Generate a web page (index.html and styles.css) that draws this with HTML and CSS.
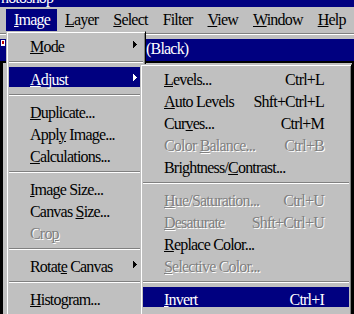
FILE: index.html
```html
<!DOCTYPE html>
<html lang="en">
<head>
<meta charset="utf-8">
<title>Photoshop - Image menu</title>
<link rel="stylesheet" href="styles.css">
</head>
<body>
<div class="app">
  <div class="app-title"><span class="app-title-text">Adobe Photoshop</span></div>
  <nav class="menubar">
    <span class="mb-item active"><u>I</u>mage</span>
    <span class="mb-item"><u>L</u>ayer</span>
    <span class="mb-item"><u>S</u>elect</span>
    <span class="mb-item">Filter</span>
    <span class="mb-item"><u>V</u>iew</span>
    <span class="mb-item"><u>W</u>indow</span>
    <span class="mb-item"><u>H</u>elp</span>
  </nav>
  <div class="menubar-rule"></div>
  <div class="doc">
    <div class="doc-title">
      <svg class="doc-icon" width="4" height="6" viewBox="0 0 4 6" shape-rendering="crispEdges"><rect width="4" height="6" fill="#fff"/><rect x="1" y="1" width="2" height="3" fill="#c00000"/></svg>
      <span class="doc-title-text">(Black)</span>
    </div>
    <div class="doc-body"></div>
  </div>

  <div class="menu menu-image">
    <div class="mi has-sub"><span class="label"><u>M</u>ode</span><svg class="arrow" width="4" height="7" viewBox="0 0 4 7" shape-rendering="crispEdges"><rect x="0" y="0" width="1" height="7"/><rect x="1" y="1" width="1" height="5"/><rect x="2" y="2" width="1" height="3"/><rect x="3" y="3" width="1" height="1"/></svg></div>
    <div class="sep"></div>
    <div class="mi has-sub sel"><span class="label"><u>A</u>djust</span><svg class="arrow" width="4" height="7" viewBox="0 0 4 7" shape-rendering="crispEdges"><rect x="0" y="0" width="1" height="7"/><rect x="1" y="1" width="1" height="5"/><rect x="2" y="2" width="1" height="3"/><rect x="3" y="3" width="1" height="1"/></svg></div>
    <div class="sep"></div>
    <div class="mi"><span class="label"><u>D</u>uplicate...</span></div>
    <div class="mi"><span class="label">Appl<u>y</u> Image...</span></div>
    <div class="mi"><span class="label"><u>C</u>alculations...</span></div>
    <div class="sep"></div>
    <div class="mi"><span class="label"><u>I</u>mage Size...</span></div>
    <div class="mi"><span class="label">Canvas <u>S</u>ize...</span></div>
    <div class="mi dis"><span class="label">Cro<u>p</u></span></div>
    <div class="sep"></div>
    <div class="mi has-sub"><span class="label">Rotat<u>e</u> Canvas</span><svg class="arrow" width="4" height="7" viewBox="0 0 4 7" shape-rendering="crispEdges"><rect x="0" y="0" width="1" height="7"/><rect x="1" y="1" width="1" height="5"/><rect x="2" y="2" width="1" height="3"/><rect x="3" y="3" width="1" height="1"/></svg></div>
    <div class="sep"></div>
    <div class="mi"><span class="label"><u>H</u>istogram...</span></div>
  </div>

  <div class="menu menu-adjust">
    <div class="mi"><span class="label"><u>L</u>evels...</span><span class="accel">Ctrl+L</span></div>
    <div class="mi"><span class="label"><u>A</u>uto Levels</span><span class="accel">Shft+Ctrl+L</span></div>
    <div class="mi"><span class="label">Cur<u>v</u>es...</span><span class="accel">Ctrl+M</span></div>
    <div class="mi dis"><span class="label">Color <u>B</u>alance...</span><span class="accel">Ctrl+B</span></div>
    <div class="mi"><span class="label">Brightness/<u>C</u>ontrast...</span></div>
    <div class="sep"></div>
    <div class="mi dis"><span class="label"><u>H</u>ue/Saturation...</span><span class="accel">Ctrl+U</span></div>
    <div class="mi dis"><span class="label"><u>D</u>esaturate</span><span class="accel">Shft+Ctrl+U</span></div>
    <div class="mi"><span class="label"><u>R</u>eplace Color...</span></div>
    <div class="mi dis"><span class="label"><u>S</u>elective Color...</span></div>
    <div class="sep"></div>
    <div class="mi sel"><span class="label"><u>I</u>nvert</span><span class="accel">Ctrl+I</span></div>
  </div>
</div>
</body>
</html>
```

FILE: styles.css
```css
* {
  box-sizing: border-box;
}

html,
body {
  margin: 0;
  padding: 0;
}

body {
  width: 354px;
  height: 314px;
  overflow: hidden;
  background: #000;
  font-family: "Liberation Serif", "Times New Roman", serif;
  font-size: 16px;
  letter-spacing: -0.8px;
  color: #000;
}

u {
  text-decoration-thickness: 1px;
  text-underline-offset: 1px;
}

.app {
  position: relative;
  height: 314px;
  display: flex;
  flex-direction: column;
  background: #c0c0c0;
}

/* application caption (cut off at the top) */
.app-title {
  height: 7px;
  background: #000080;
  color: #fff;
  overflow: hidden;
  white-space: nowrap;
  line-height: 16px;
}

.app-title-text {
  display: block;
  margin-top: -10px;
  margin-left: -49px;
}

/* menu bar */
.menubar {
  height: 26px;
  display: flex;
  padding: 2px 0 0 6px;
  background: #c0c0c0;
  white-space: nowrap;
}

.mb-item {
  height: 22px;
  line-height: 22px;
  padding: 0 7px 0 8px;
}

.mb-item.active {
  background: #000080;
  color: #fff;
}

.menubar-rule {
  height: 2px;
  border-top: 1px solid #808080;
  border-bottom: 1px solid #fff;
}

/* document window */
.doc {
  flex: 1;
  display: flex;
  flex-direction: column;
  padding-top: 4px;
}

.doc-title {
  height: 22px;
  display: flex;
  align-items: flex-start;
  padding-left: 1px;
  background: #000080;
  color: #fff;
  line-height: 20px;
  white-space: nowrap;
}

.doc-icon {
  margin-top: 1px;
}

.doc-title-text {
  margin-left: 141px;
}

.doc-body {
  flex: 1;
  background: #c0c0c0;
  border-top: 2px solid #000;
  border-left: 3px solid #000;
  border-right: 2px solid #000;
}

/* drop-down menus */
.menu {
  position: absolute;
  display: flex;
  flex-direction: column;
  background: #c0c0c0;
  border: 1px solid;
  border-color: #c0c0c0 #000 #000 #c0c0c0;
  box-shadow: inset 1px 1px 0 #fff, inset -1px -1px 0 #808080;
  padding: 2px;
  white-space: nowrap;
}

.menu-image {
  left: 6px;
  top: 31px;
  width: 140px;
  bottom: -6px;
  z-index: 1;
}

.menu-adjust {
  left: 140px;
  top: 64px;
  width: 212px;
  bottom: -6px;
  z-index: 2;
}

.mi {
  display: flex;
  align-items: flex-start;
  height: 20px;
  margin-bottom: 2px;
  padding: 6px 6px 0 21px;
  line-height: 14px;
  flex: none;
}

.mi .label {
  flex: 1;
}

.mi .accel {
  padding-right: 19px;
}

.mi.sel {
  background: #000080;
  color: #fff;
}

.mi.dis {
  color: #808080;
  text-shadow: 1px 1px 0 #fff;
}

.arrow {
  margin-top: 1px;
  fill: currentColor;
  flex: none;
}

.sep {
  flex: none;
  height: 2px;
  margin: 5px 0 4px;
  border-top: 1px solid #808080;
  border-bottom: 1px solid #fff;
}
```
